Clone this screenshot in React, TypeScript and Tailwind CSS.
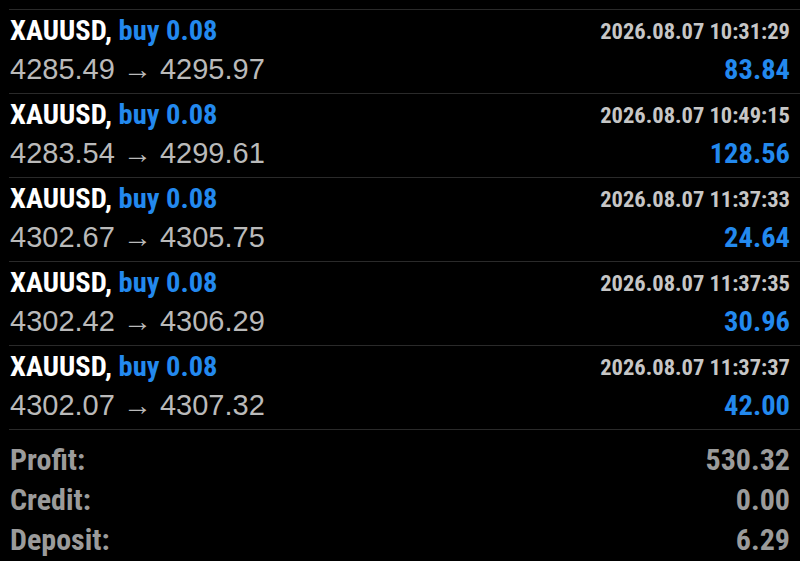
const trades = [
  { open: "4285.49", close: "4295.97", time: "2026.08.07 10:31:29", profit: "83.84" },
  { open: "4283.54", close: "4299.61", time: "2026.08.07 10:49:15", profit: "128.56" },
  { open: "4302.67", close: "4305.75", time: "2026.08.07 11:37:33", profit: "24.64" },
  { open: "4302.42", close: "4306.29", time: "2026.08.07 11:37:35", profit: "30.96" },
  { open: "4302.07", close: "4307.32", time: "2026.08.07 11:37:37", profit: "42.00" },
];

const totals = [
  { label: "Profit:", value: "530.32" },
  { label: "Credit:", value: "0.00" },
  { label: "Deposit:", value: "6.29" },
];

// condensed bold face used for symbol, time, profit and totals
const cond = "font-['Roboto',sans-serif] font-bold font-stretch-condensed";

function TradeRow({ open, close, time, profit }: (typeof trades)[number]) {
  return (
    <div className="h-[84px] border-t border-[#2a2a2a] pl-[1px] pr-[10px] pt-[7px]">
      <div className="flex items-start justify-between">
        <span className={`${cond} text-[28.5px] leading-[28px] text-white`}>
          XAUUSD, <span className="text-[#2389ee]">buy 0.08</span>
        </span>
        <span className={`${cond} text-[22.5px] leading-none text-[#c6c6c6] mt-[3px]`}>{time}</span>
      </div>
      <div className="flex items-baseline justify-between mt-[10px]">
        <span className="font-['Liberation_Sans',sans-serif] text-[29px] leading-none text-[#bababa]">
          {open} → {close}
        </span>
        <span className={`${cond} text-[28.5px] leading-none text-[#2389ee]`}>{profit}</span>
      </div>
    </div>
  );
}

export default function App() {
  return (
    <div className="w-[800px] h-[561px] bg-black overflow-hidden pt-[9px] pl-[9px]">
      {trades.map((t) => (
        <TradeRow key={t.time} {...t} />
      ))}
      <div className="border-t border-[#2a2a2a] pl-[1px] pr-[10px] pt-[10px]">
        {totals.map((t) => (
          <div
            key={t.label}
            className={`flex justify-between ${cond} text-[30px] leading-[40px] text-[#9b9b9b]`}
          >
            <span>{t.label}</span>
            <span>{t.value}</span>
          </div>
        ))}
      </div>
    </div>
  );
}
